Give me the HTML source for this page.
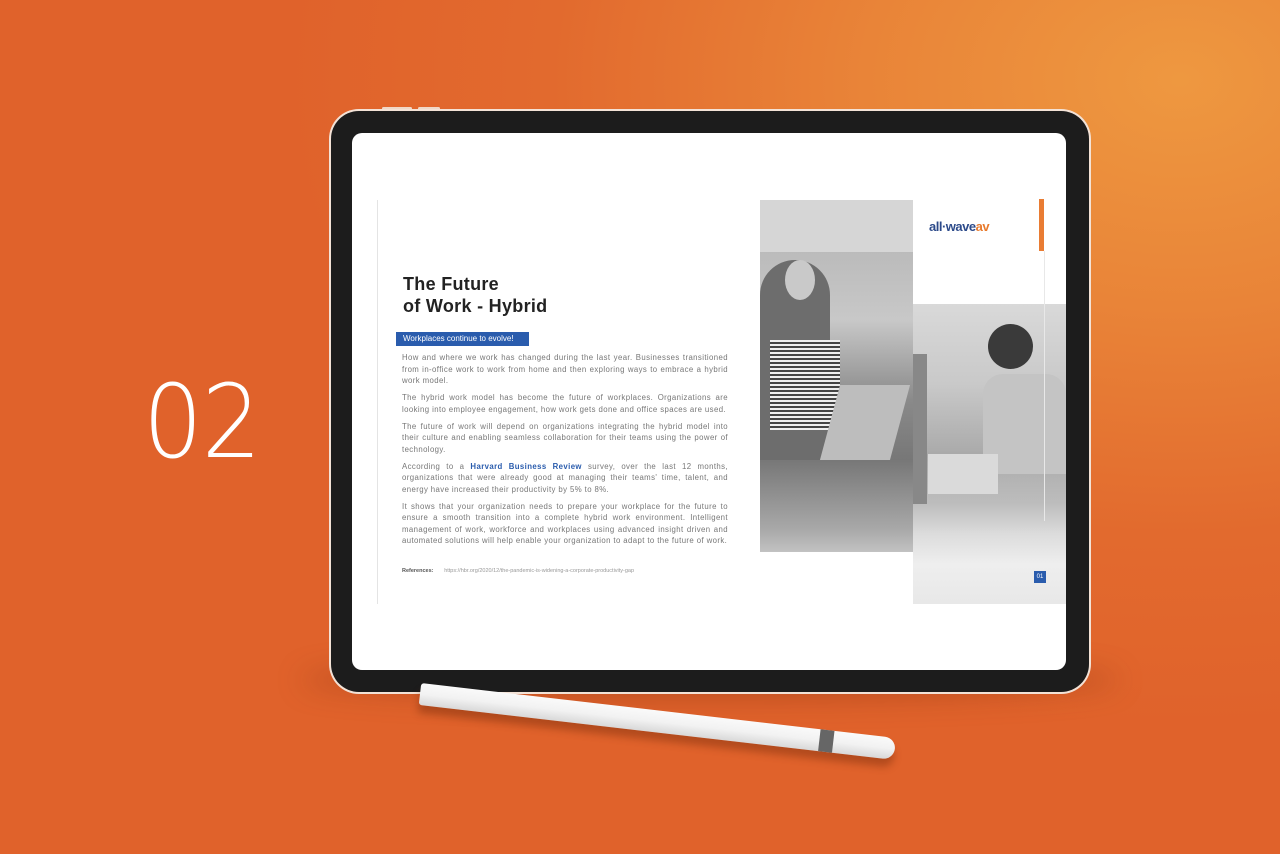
<!DOCTYPE html>
<html><head><meta charset="utf-8"><style>
*{margin:0;padding:0;box-sizing:border-box}
body{width:1280px;height:854px;overflow:hidden;position:relative;font-family:"Liberation Sans",sans-serif;
background:radial-gradient(ellipse 900px 650px at 1180px 80px,#ee9840 0%,#e98438 35%,#e26a2e 70%,#e0622b 100%);}
.num{position:absolute;left:143px;top:372px;font-family:"DejaVu Sans ExtraLight","DejaVu Sans",sans-serif;font-weight:200;font-size:102px;color:#fff;letter-spacing:-1px;line-height:1;transform:scaleX(0.92);transform-origin:left}
.shadow{position:absolute;left:300px;top:660px;width:820px;height:40px;background:rgba(120,40,10,.3);filter:blur(14px);border-radius:50%}
.rim{position:absolute;left:329px;top:109px;width:762px;height:585px;border-radius:30px;background:#f3e2d6}
.dev{position:absolute;left:331px;top:111px;width:758px;height:581px;border-radius:28px;background:#1c1c1c}
.scr{position:absolute;left:352px;top:133px;width:714px;height:537px;border-radius:10px;background:#fff;overflow:hidden}
.btn{position:absolute;top:107px;height:3px;background:#f0d8c8;border-radius:2px}
h1{position:absolute;left:51px;top:140px;font-family:"Liberation Sans",sans-serif;font-weight:bold;font-size:18px;line-height:22px;color:#222;letter-spacing:0.3px}
.tag{position:absolute;left:44px;top:199px;width:133px;height:14px;background:#2a5cad;color:#fff;font-size:8px;line-height:14px;padding-left:7px}
.body{position:absolute;left:50px;top:219px;width:326px;font-size:7.8px;letter-spacing:0.4px;line-height:11.5px;color:#777;text-align:justify}
.body p{margin-bottom:5.5px}
.body b{color:#2a5cad}
.ref{position:absolute;left:50px;top:435px;font-size:5.5px;color:#999}
.vl{position:absolute;left:25px;top:67px;width:1px;height:404px;background:#e4e4e4}
.photo1{position:absolute;left:408px;top:67px;width:153px;height:352px;background:linear-gradient(180deg,#d6d6d6 0,#d6d6d6 52px,#bbb 52px,#c8c8c8 120px,#8a8a8a 200px,#777 260px,#a9a9a9 330px,#c2c2c2 352px)}
.photo2{position:absolute;left:561px;top:171px;width:153px;height:300px;background:linear-gradient(180deg,#d9d9d9 0,#c9c9c9 80px,#aaa 150px,#bdbdbd 200px,#dcdcdc 230px,#eee 260px,#e8e8e8 300px)}
.logo{position:absolute;left:577px;top:86px;font-weight:bold;font-size:13px;letter-spacing:-0.5px;color:#2c4a8a;font-family:"Liberation Sans",sans-serif}
.logo span{color:#e87a2d}
.obar{position:absolute;left:687px;top:66px;width:5px;height:52px;background:#e97c33}
.thin{position:absolute;left:692px;top:118px;width:1px;height:270px;background:#e8e8e8}
.pg{position:absolute;left:682px;top:438px;width:12px;height:12px;background:#2a5cad;color:#fff;font-size:6px;line-height:12px;text-align:center}
.pencil{position:absolute;left:420px;top:683px;width:478px;height:22px;transform-origin:0 50%;transform:rotate(6.6deg);border-radius:3px 11px 11px 3px;background:linear-gradient(180deg,#fafafa,#f2f2f2 50%,#d8d8d8);box-shadow:0 8px 8px rgba(110,40,10,.4)}
.band{position:absolute;left:402px;top:0;width:14px;height:22px;background:#666}
</style></head><body>
<div class="num">02</div>
<div class="shadow"></div>
<div class="btn" style="left:382px;width:30px"></div>
<div class="btn" style="left:418px;width:22px"></div>
<div class="rim"></div>
<div class="dev"></div>
<div class="scr">
  <div class="vl"></div>
  <h1>The Future<br>of Work - Hybrid</h1>
  <div class="tag">Workplaces continue to evolve!</div>
  <div class="body">
    <p>How and where we work has changed during the last year. Businesses transitioned from in-office work to work from home and then exploring ways to embrace a hybrid work model.</p>
    <p>The hybrid work model has become the future of workplaces. Organizations are looking into employee engagement, how work gets done and office spaces are used.</p>
    <p>The future of work will depend on organizations integrating the hybrid model into their culture and enabling seamless collaboration for their teams using the power of technology.</p>
    <p>According to a <b>Harvard Business Review</b> survey, over the last 12 months, organizations that were already good at managing their teams' time, talent, and energy have increased their productivity by 5% to 8%.</p>
    <p>It shows that your organization needs to prepare your workplace for the future to ensure a smooth transition into a complete hybrid work environment. Intelligent management of work, workforce and workplaces using advanced insight driven and automated solutions will help enable your organization to adapt to the future of work.</p>
  </div>
  <div class="ref"><b style="color:#555">References:</b>&nbsp;&nbsp;&nbsp;&nbsp;&nbsp;&nbsp;&nbsp;https://hbr.org/2020/12/the-pandemic-is-widening-a-corporate-productivity-gap</div>
  <div class="photo1">
    <div style="position:absolute;left:0;top:60px;width:70px;height:200px;background:#6d6d6d;border-radius:35px 35px 0 0"></div>
    <div style="position:absolute;left:10px;top:140px;width:70px;height:90px;background:repeating-linear-gradient(180deg,#eee 0 2px,#444 2px 4px)"></div>
    <div style="position:absolute;left:70px;top:185px;width:70px;height:75px;background:#bdbdbd;transform:skewX(-15deg)"></div>
    <div style="position:absolute;left:25px;top:60px;width:30px;height:40px;background:#c9c9c9;border-radius:50%"></div>
  </div>
  <div class="photo2">
    <div style="position:absolute;left:75px;top:20px;width:45px;height:45px;background:#3a3a3a;border-radius:50%"></div>
    <div style="position:absolute;left:70px;top:70px;width:83px;height:100px;background:#c4c4c4;border-radius:20px 20px 0 0"></div>
    <div style="position:absolute;left:15px;top:150px;width:70px;height:40px;background:#dadada"></div>
    <div style="position:absolute;left:0;top:50px;width:14px;height:150px;background:#888"></div>
  </div>
  <div class="logo">all·wave<span>av</span></div>
  <div class="obar"></div>
  <div class="thin"></div>
  <div class="pg">01</div>
</div>
<div class="pencil"><div class="band"></div></div>
</body></html>
